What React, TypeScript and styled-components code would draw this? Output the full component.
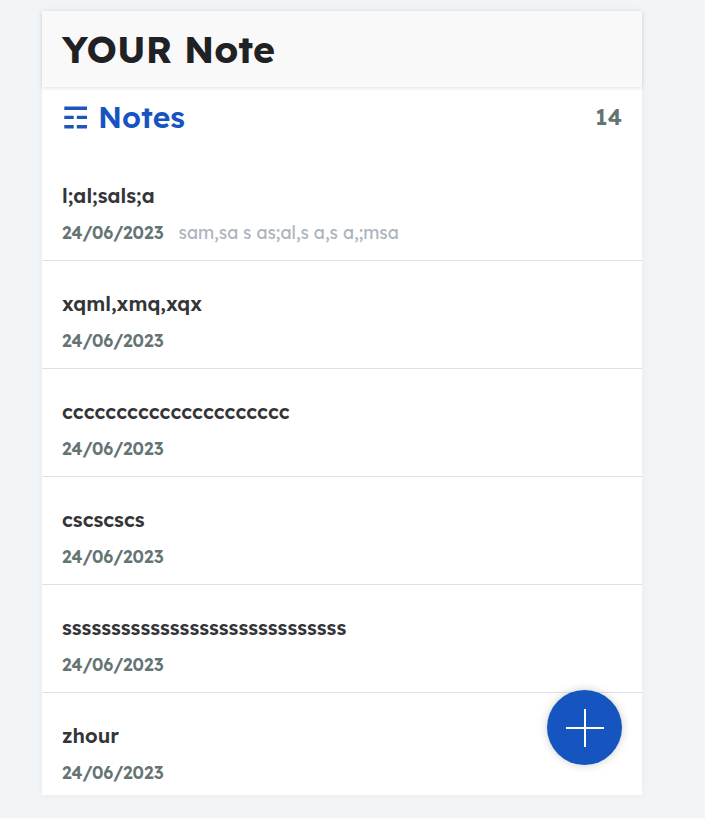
import React from "react";
import styled, { createGlobalStyle } from "styled-components";

const GlobalStyle = createGlobalStyle`
  * { box-sizing: border-box; }
  html { font-size: 12.5px; }
  body {
    margin: 0;
    background: #f1f5f8;
    font-family: "Lexend", "Inter", sans-serif;
    font-feature-settings: "cv11";
    overflow: hidden;
  }
  h1, h2, h3, p { margin: 0; }
`;

const Page = styled.div`
  height: 818px;
  padding: 11px 0 0 42px;
`;

const Card = styled.main`
  position: relative;
  width: 600px;
  height: 784px;
  background: #fff;
  box-shadow: 0 0 8px rgba(0, 0, 0, 0.05);
`;

const Header = styled.header`
  height: 76px;
  padding-left: 20px;
  background: #f9f9f9;
  box-shadow: 0 1px 4px rgba(0, 0, 0, 0.12);
`;

const AppTitle = styled.h1`
  font-size: 3rem;
  line-height: 76px;
  font-weight: 700;
  color: #1f2124;
  white-space: nowrap;
`;

const Summary = styled.div`
  display: flex;
  align-items: center;
  height: 60px;
  padding: 0 20px;
`;

const ListIcon = styled.svg`
  width: 24px;
  height: 24px;
  margin: 0 10px 0 2px;
  fill: #1d55b8;
`;

const Heading = styled.h2`
  flex: 1;
  font-size: 2.4rem;
  line-height: 60px;
  font-weight: 600;
  color: #1655bf;
`;

const Count = styled.span`
  font-size: 1.8rem;
  line-height: 60px;
  font-weight: 600;
  color: #647473;
`;

const List = styled.div`
  height: 648px;
  padding-top: 6px;
  overflow: hidden;
`;

const Item = styled.article`
  height: 108px;
  padding: 29px 20px 0;
  border-bottom: 1px solid #dfe2e5;
`;

const ItemTitle = styled.h3`
  height: 28px;
  font-size: 1.6rem;
  line-height: 28px;
  font-weight: 600;
  color: #343539;
`;

const Meta = styled.div`
  display: flex;
  height: 24px;
  margin-top: 10px;
  line-height: 24px;
`;

const NoteDate = styled.time`
  width: 116.5px;
  font-size: 1.4rem;
  font-weight: 600;
  color: #647473;
`;

const Preview = styled.p`
  font-size: 1.4rem;
  color: #acb4be;
`;

const AddButton = styled.button`
  position: absolute;
  right: 20px;
  bottom: 30px;
  display: grid;
  place-items: center;
  width: 6rem;
  height: 6rem;
  padding: 0;
  border: 0;
  border-radius: 50%;
  background: #1655bf;
  box-shadow: 0 0 10px rgba(0, 0, 0, 0.2);
`;

const notes = [
  { title: "l;al;sals;a", preview: "sam,sa s as;al,s a,s a,;msa" },
  { title: "xqml,xmq,xqx", preview: "" },
  { title: "ccccccccccccccccccccc", preview: "" },
  { title: "cscscscs", preview: "" },
  { title: "sssssssssssssssssssssssssssss", preview: "" },
  { title: "zhour", preview: "" },
];

export default function App() {
  return (
    <Page>
      <GlobalStyle />
      <Card>
        <Header>
          <AppTitle>YOUR Note</AppTitle>
        </Header>
        <Summary>
          <ListIcon viewBox="0 0 24 24" aria-hidden="true">
            <path d="M0.3 1.4h22.7v3.5H0.3zM0.3 10.8h9.4v3.3H0.3zM12.8 10.8h10.2v3.3H12.8zM0.3 20.1h9.4v3.5H0.3zM12.8 20.1h10.2v3.5H12.8z" />
          </ListIcon>
          <Heading>Notes</Heading>
          <Count>14</Count>
        </Summary>
        <List>
          {notes.map((note) => (
            <Item key={note.title}>
              <ItemTitle>{note.title}</ItemTitle>
              <Meta>
                <NoteDate>24/06/2023</NoteDate>
                {note.preview && <Preview>{note.preview}</Preview>}
              </Meta>
            </Item>
          ))}
        </List>
        <AddButton aria-label="Add note">
          <svg width="38" height="38" viewBox="0 0 38 38" fill="none" stroke="#fff" strokeWidth="2">
            <path d="M19 0v38M0 19h38" />
          </svg>
        </AddButton>
      </Card>
    </Page>
  );
}
